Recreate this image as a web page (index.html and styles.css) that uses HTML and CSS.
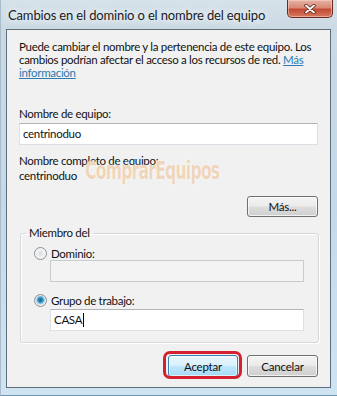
FILE: index.html
```html
<!DOCTYPE html>
<html lang="es">

<head>
    <meta charset="UTF-8">
    <meta name="viewport" content="width=device-width, initial-scale=1.0">
    <title>Cambios en el dominio o el nombre del equipo</title>
    <link rel="stylesheet" href="styles.css">
</head>

<body>
    <div class="window">
        <div class="titleBar">
            <span class="title">Cambios en el dominio o el nombre del equipo</span>
            <button type="button" class="closeButton" aria-label="Cerrar">
                <svg width="12" height="10" viewBox="0 0 12 10">
                    <path d="M2 1.5 L10 8.5 M10 1.5 L2 8.5" stroke="#5a2018" stroke-width="3.4" stroke-linecap="round" />
                    <path d="M2 1.5 L10 8.5 M10 1.5 L2 8.5" stroke="#ffffff" stroke-width="1.8" stroke-linecap="round" />
                </svg>
            </button>
        </div>

        <div class="client">
            <p class="intro">Puede cambiar el nombre y la pertenencia de este equipo. Los cambios podrían afectar el acceso a los recursos de red. <a href="#" class="link">Más información</a></p>

            <div class="label">Nombre de equipo:</div>
            <div class="textBox">centrinoduo</div>

            <div class="fullName">
                <div>Nombre completo de equipo:</div>
                <div>centrinoduo</div>
            </div>

            <div class="moreRow">
                <button type="button" class="btn">Más...</button>
            </div>

            <fieldset class="group">
                <legend class="groupTitle">Miembro del</legend>
                <label class="option"><input type="radio" name="member" class="radio"> Dominio:</label>
                <div class="textBox indent disabled"></div>
                <label class="option second"><input type="radio" name="member" class="radio" checked> Grupo de trabajo:</label>
                <div class="textBox indent focused">CASA<span class="caret"></span></div>
            </fieldset>

            <div class="actions">
                <button type="button" class="btn btnDefault">Aceptar</button>
                <button type="button" class="btn btnCancel">Cancelar</button>
            </div>
        </div>

        <div class="watermark">ComprarEquipos</div>
    </div>
</body>

</html>
```

FILE: styles.css
```css
* {
    margin: 0;
    padding: 0;
    box-sizing: border-box;
}

body {
    width: 337px;
    height: 396px;
    overflow: hidden;
    background-color: #c7dbea;
    font-family: Lato, "Liberation Sans", sans-serif;
    font-size: 11.5px;
    letter-spacing: -0.3px;
    color: #111;
}

.window {
    position: relative;
    width: 337px;
    height: 396px;
    background: linear-gradient(to bottom, #d6e2ea 0px, #cbd9e3 30px, #c3d9ea 200px, #cfe4f3 396px);
    border-left: 1px solid #a9bccb;
    border-bottom: 1px solid #6f93a8;
}

/* barra de titulo */
.titleBar {
    display: flex;
    align-items: flex-start;
    height: 29px;
}

.title {
    padding: 7px 0 0 7px;
    font-size: 13px;
    letter-spacing: -0.15px;
    line-height: 16px;
    color: #1b1b1b;
    white-space: nowrap;
    text-shadow: 0 0 6px #f4f8fb, 0 0 10px #eef4f8;
}

.closeButton {
    display: flex;
    align-items: center;
    justify-content: center;
    margin-left: auto;
    margin-right: 4px;
    width: 46px;
    height: 18px;
    border: 1px solid #6e2a20;
    border-top: 0;
    border-radius: 0 0 5px 5px;
    background: linear-gradient(to bottom, #e6b1a4 0%, #d98a76 45%, #c24a34 55%, #d67a60 100%);
    box-shadow: inset 0 0 0 1px rgba(255, 220, 210, 0.5);
}

/* area del dialogo */
.client {
    position: relative;
    margin-left: 5px;
    width: 325px;
    height: 359px;
    padding: 10px 12px 0 12px;
    background-color: #f1f1f1;
    border: 1px solid #5f6e7b;
}

.intro {
    line-height: 13px;
}

.link {
    color: #2b7bb0;
}

.label {
    margin-top: 28px;
    line-height: 14px;
}

.textBox {
    height: 22px;
    padding: 0 3px;
    line-height: 20px;
    background-color: #fff;
    border: 1px solid #dbe0e6;
    border-top-color: #b0b4ba;
}

.textBox.indent {
    margin-left: 16px;
}

.textBox.disabled {
    background-color: #f3f3f3;
    border-color: #c9cccf;
}

.label+.textBox {
    margin-top: 2px;
}

.caret {
    display: inline-block;
    width: 1px;
    height: 14px;
    margin-left: 1px;
    vertical-align: -3px;
    background-color: #000;
}

.fullName {
    margin-top: 8px;
    line-height: 15px;
}

.moreRow {
    display: flex;
    justify-content: flex-end;
    margin-top: 13px;
}

/* botones estilo vista */
.btn {
    width: 71px;
    height: 21px;
    font-family: Lato, "Liberation Sans", sans-serif;
    font-size: 11.5px;
    letter-spacing: -0.2px;
    color: #111;
    border: 1px solid #707070;
    border-radius: 3px;
    background: linear-gradient(to bottom, #f4f4f4 0%, #ebebeb 48%, #dddddd 52%, #cfcfcf 100%);
    box-shadow: inset 0 0 0 1px rgba(255, 255, 255, 0.7);
}

.group {
    margin: 9px -1px 0 1px;
    padding: 6px 14px 11px 13px;
    border: 1px solid #d5d9dd;
    border-radius: 3px;
    box-shadow: 1px 1px 0 #ffffff, inset 1px 1px 0 #ffffff;
}

.groupTitle {
    margin-left: -8px;
    padding: 0 3px;
    line-height: 14px;
}

.option {
    display: flex;
    align-items: center;
    gap: 4px;
    height: 14px;
}

.option.second {
    margin-top: 11px;
}

.option.second+.textBox {
    margin-top: 2px;
}

.radio {
    appearance: none;
    width: 13px;
    height: 13px;
    border: 1px solid #8b9096;
    border-radius: 50%;
    background: radial-gradient(circle at 50% 50%, #d9dcdf 0, #eceef0 3px, #f7f7f7 6px);
}

.radio:checked {
    background: radial-gradient(circle at 50% 45%, #1f5f86 0, #2a86b6 2px, #6ebde3 3.5px, #dde3e8 4.5px, #f4f4f4 6px);
}

.actions {
    display: flex;
    justify-content: flex-end;
    gap: 9px;
    margin-top: 12px;
}

.actions .btn {
    height: 22px;
}

.btnDefault {
    position: relative;
    width: 70px;
    border-color: #3c7fb1;
    background: linear-gradient(to bottom, #eaf6fd 0%, #d9f0fc 48%, #bee6fd 52%, #a7d9f5 100%);
    box-shadow: inset 0 0 0 1px rgba(255, 255, 255, 0.6);
}

/* marca roja de la captura */
.btnDefault::after {
    position: absolute;
    top: -5px;
    left: -6px;
    right: -5px;
    bottom: -3px;
    border: 3px solid #d4202f;
    border-radius: 7px;
    content: '';
}

.watermark {
    position: absolute;
    left: 84px;
    top: 157px;
    font-family: "DejaVu Sans Condensed", "DejaVu Sans", sans-serif;
    font-weight: bold;
    font-size: 24px;
    line-height: 28px;
    letter-spacing: -1px;
    color: rgba(225, 178, 128, 0.55);
    transform: scaleX(0.72);
    transform-origin: left top;
    text-shadow: 0 0 1px #fff, 0 0 2px #fff;
}
```
